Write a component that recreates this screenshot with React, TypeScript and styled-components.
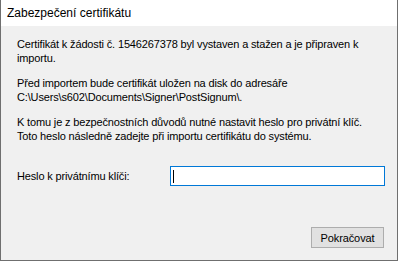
import React from "react";
import styled, { createGlobalStyle } from "styled-components";

const GlobalStyle = createGlobalStyle`
  html, body {
    margin: 0;
    padding: 0;
    background: #f0f0f0;
  }
`;

const Window = styled.div`
  width: 398px;
  height: 261px;
  box-sizing: border-box;
  border: 1px solid #6f6f6f;
  border-top: none;
  background: #f0f0f0;
  display: flex;
  flex-direction: column;
  font-family: "Liberation Sans", Arial, sans-serif;
  color: #000;
`;

const TitleBar = styled.div`
  height: 26px;
  flex: none;
  background: #fff;
  display: flex;
  align-items: center;
  padding-left: 6px;
  font-size: 12px;
  padding-bottom: 1px;
  box-sizing: border-box;
`;

const Body = styled.div`
  flex: 1;
  display: flex;
  flex-direction: column;
  padding: 11px 12px 12px 16px;
  font-size: 11px;
  line-height: 14px;
  letter-spacing: -0.15px;
`;

const Para = styled.p<{ $gap?: number }>`
  margin: 0 0 ${(p) => p.$gap ?? 11}px 0;
`;

const FieldRow = styled.div`
  display: flex;
  align-items: center;
  margin-top: 12px;
`;

const Label = styled.label`
  width: 153px;
  flex: none;
`;

const Input = styled.div`
  width: 215px;
  height: 20px;
  box-sizing: border-box;
  border: 1px solid #0078d7;
  background: #fff;
  display: flex;
  align-items: center;
  padding-left: 2px;
`;

const Caret = styled.span`
  width: 1px;
  height: 13px;
  background: #000;
`;

const Footer = styled.div`
  margin-top: auto;
  display: flex;
  justify-content: flex-end;
  padding-right: 1px;
`;

const Button = styled.button`
  width: 73px;
  height: 21px;
  box-sizing: border-box;
  border: 1px solid #adadad;
  background: #e1e1e1;
  font-family: "Liberation Sans", Arial, sans-serif;
  font-size: 11px;
  letter-spacing: -0.1px;
  color: #000;
  padding: 0;
`;

export default function App() {
  return (
    <>
      <GlobalStyle />
      <Window>
        <TitleBar>Zabezpečení certifikátu</TitleBar>
        <Body>
          <Para>
            Certifikát k žádosti č. 1546267378 byl vystaven a stažen a je připraven k
            <br />
            importu.
          </Para>
          <Para>
            Před importem bude certifikát uložen na disk do adresáře
            <br />
            C:\Users\s602\Documents\Signer\PostSignum\.
          </Para>
          <Para>
            K tomu je z bezpečnostních důvodů nutné nastavit heslo pro privátní klíč.
            <br />
            Toto heslo následně zadejte při importu certifikátu do systému.
          </Para>
          <FieldRow>
            <Label>Heslo k privátnímu klíči:</Label>
            <Input>
              <Caret />
            </Input>
          </FieldRow>
          <Footer>
            <Button>Pokračovat</Button>
          </Footer>
        </Body>
      </Window>
    </>
  );
}
